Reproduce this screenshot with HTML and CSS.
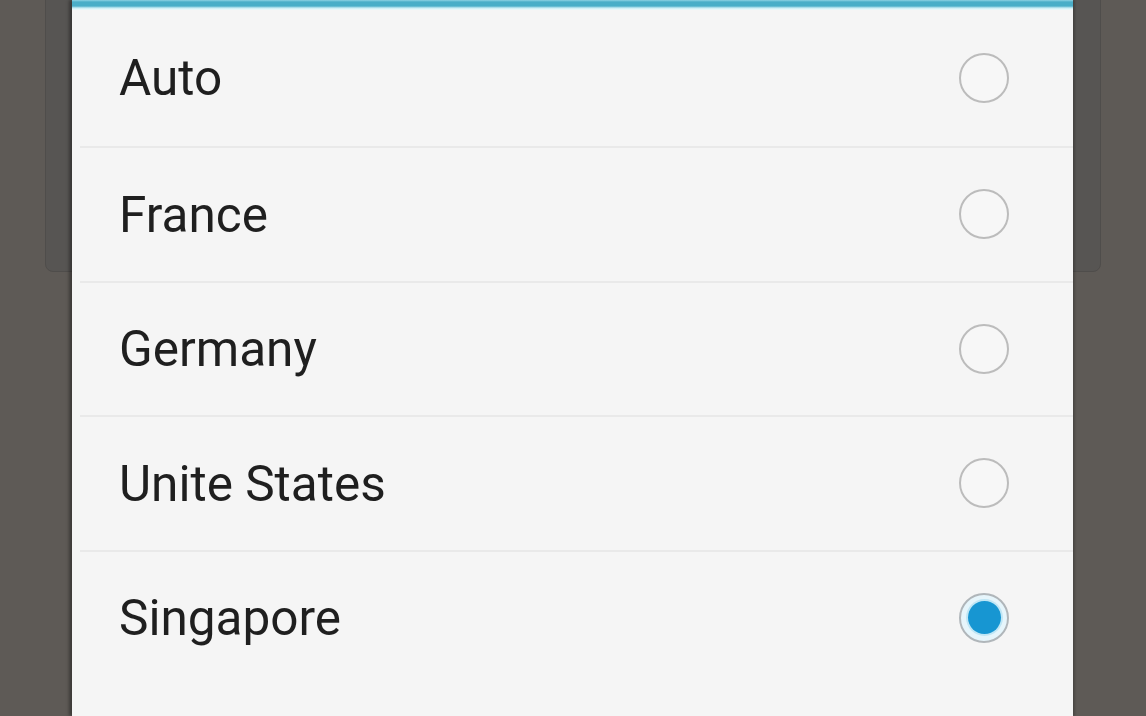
FILE: index.html
```html
<!DOCTYPE html>
<html lang="en">
<head>
<meta charset="utf-8">
<title>Region</title>
<link rel="stylesheet" href="styles.css">
</head>
<body>
<div class="screen">
  <div class="back-card"></div>
  <div class="dialog">
    <div class="topbar"></div>
    <ul class="options">
      <li class="option"><span class="label">Auto</span><span class="radio"></span></li>
      <li class="option"><span class="label">France</span><span class="radio"></span></li>
      <li class="option"><span class="label">Germany</span><span class="radio"></span></li>
      <li class="option"><span class="label">Unite States</span><span class="radio"></span></li>
      <li class="option"><span class="label">Singapore</span><span class="radio checked"></span></li>
    </ul>
  </div>
</div>
</body>
</html>
```

FILE: styles.css
```css
html, body {
  margin: 0;
  padding: 0;
  width: 1146px;
  height: 716px;
  overflow: hidden;
  background: #5e5a56;
  font-family: Roboto, "Noto Sans", "Liberation Sans", sans-serif;
}

.screen {
  position: relative;
  width: 1146px;
  height: 716px;
  display: flex;
  justify-content: flex-start;
}

.back-card {
  position: absolute;
  left: 45px;
  top: -10px;
  width: 1056px;
  height: 282px;
  background: #575553;
  border: 1px solid #4f4d4b;
  border-radius: 8px;
  box-sizing: border-box;
}

.dialog {
  position: relative;
  margin-left: 72px;
  width: 1001px;
  height: 716px;
  background: #f5f5f5;
  box-shadow: -3px 0 3px rgba(0,0,0,0.35), 2px 0 2px rgba(0,0,0,0.2);
  display: flex;
  flex-direction: column;
}

.topbar {
  height: 10px;
  flex: none;
  background: linear-gradient(#8fd3e3 0, #4aaec8 2px, #4aaec8 6px, #c8edf5 8px, #f2fafc 10px);
}

.options {
  list-style: none;
  margin: 0;
  padding: 0;
  display: flex;
  flex-direction: column;
}

.option {
  height: 136px;
  flex: none;
  display: flex;
  align-items: center;
  justify-content: space-between;
  padding: 0 64px 0 47px;
  position: relative;
  box-sizing: border-box;
}

.option + .option {
  border-top: 2px solid #e9e9e9;
  margin-left: 8px;
  padding-left: 39px;
  height: 134.5px;
}

.label {
  font-size: 49.5px;
  color: #1f1f1f;
  line-height: 1;
  position: relative;
  top: 1px;
}

.radio {
  width: 50px;
  height: 50px;
  border: 2.5px solid #bcbcbc;
  border-radius: 50%;
  box-sizing: border-box;
  background: #f7f7f7;
  position: relative;
}

.radio.checked {
  border-color: #b0b6ba;
  background: #e6f5fb;
}

.radio.checked::after {
  content: "";
  position: absolute;
  left: 50%;
  top: 50%;
  width: 33px;
  height: 33px;
  margin: -16.5px 0 0 -16.5px;
  border-radius: 50%;
  background: #1796d2;
  box-shadow: 0 0 0 2px #bfe6f5;
}
```
